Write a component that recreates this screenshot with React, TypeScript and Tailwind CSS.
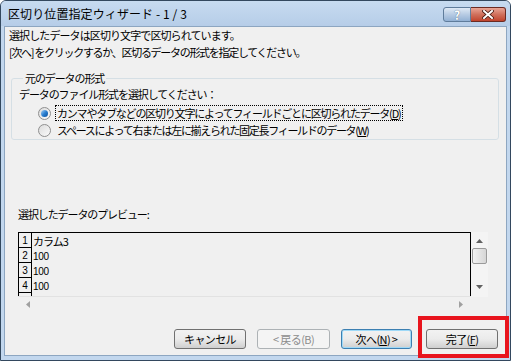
import React from "react";

const jp = "font-['Meiryo_UI','Noto_Sans_CJK_JP',sans-serif]";

function Radio({ checked }: { checked?: boolean }) {
    return (
        <span className="w-[13px] h-[13px] rounded-full border border-[#8f8f8f] bg-gradient-to-br from-[#dcdcdc] to-[#fafafa] flex items-center justify-center shrink-0">
            {checked && <span className="w-[7px] h-[7px] rounded-full bg-gradient-to-br from-[#9fd0f5] via-[#2a7fd0] to-[#0b4f9e]" />}
        </span>
    );
}

function Btn({ children, variant }: { children: React.ReactNode; variant?: "default" | "disabled" }) {
    const border = variant === "default" ? "border-[#3c7fb1] shadow-[inset_0_0_0_1px_#9fd9f7]" : variant === "disabled" ? "border-[#adb2b5]" : "border-[#707070]";
    const text = variant === "disabled" ? "text-[#8c8c8c]" : "text-black";
    const bg = variant === "disabled" ? "bg-[#f4f4f4]" : "bg-gradient-to-b from-[#f2f2f2] via-[#ebebeb] to-[#cfcfcf]";
    return (
        <div className={`h-[20px] rounded-[3px] border ${border} ${bg} ${text} flex items-center justify-center text-[11px] tracking-[-0.6px]`}>
            {children}
        </div>
    );
}

export default function App() {
    return (
        <div className={`w-[511px] h-[361px] bg-white ${jp} text-[11px] leading-[16px] text-black`}>
            <div className="w-full h-full rounded-t-[6px] border border-[#33485e] bg-[#c2d7ee] flex flex-col overflow-hidden">
                {/* title bar */}
                <div className="h-[25px] shrink-0 flex items-start pl-[7px] pr-[4px] bg-gradient-to-b from-[#c7dbf0] to-[#b6cde8]">
                    <span className="mt-[5px] text-[12px] tracking-[0.1px] text-black">区切り位置指定ウィザード - 1 / 3</span>
                    <div className="ml-auto flex items-start mt-[6px]">
                        <div className="w-[28px] h-[15px] rounded-l-[3px] border border-[#5f7c9b] bg-gradient-to-b from-[#dfe9f5] via-[#b7cbe3] to-[#93b1d4] flex items-center justify-center text-white text-[12px] font-bold [text-shadow:0_0_1px_#374e6a] leading-none">?</div>
                        <div className="w-[35px] h-[15px] rounded-r-[3px] border border-l-0 border-[#6b2a22] bg-gradient-to-b from-[#e8a596] via-[#d0705c] to-[#c0432c] flex items-center justify-center">
                            <svg width="12" height="9" viewBox="0 0 12 9">
                                <path d="M2 1 L10 8 M10 1 L2 8" stroke="#4a1a12" strokeWidth="3.6" strokeLinecap="square" />
                                <path d="M2 1 L10 8 M10 1 L2 8" stroke="#ffffff" strokeWidth="2" strokeLinecap="square" />
                            </svg>
                        </div>
                    </div>
                </div>
                {/* client */}
                <div className="flex-1 mx-[3px] mb-[4px] border border-[#8da6c1] bg-[#f0f0f0] flex flex-col pl-[4px] pr-[6px] relative">
                    <div className="tracking-[-0.9px]">選択したデータは区切り文字で区切られています。</div>
                    <div className="mt-[1px] tracking-[-1.3px]">[次へ] をクリックするか、区切るデータの形式を指定してください。</div>
                    <fieldset className="mt-[10px] ml-[2px] mr-[1px] h-[70px] border border-[#d5dfe5] rounded-[3px] pl-[7px]">
                        <legend className="ml-[4px] px-[2px] tracking-[-1.1px]">元のデータの形式</legend>
                        <div className="mt-[1px] leading-[14px] tracking-[-1.1px]">データのファイル形式を選択してください：</div>
                        <div className="flex items-center gap-[5px] pl-[19px] mt-[5px]">
                            <Radio checked />
                            <span className="outline-1 outline-dotted outline-black px-[1px] leading-[14px] tracking-[-1.2px]">カンマやタブなどの区切り文字によってフィールドごとに区切られたデータ(<span className="underline">D</span>)</span>
                        </div>
                        <div className="flex items-center gap-[5px] pl-[19px] mt-[3px]">
                            <Radio />
                            <span className="px-[1px] leading-[14px] tracking-[-1.3px]">スペースによって右または左に揃えられた固定長フィールドのデータ(<span className="underline">W</span>)</span>
                        </div>
                    </fieldset>
                    <div className="mt-[66px] pl-[9px] tracking-[-1.1px]">選択したデータのプレビュー:</div>
                    {/* preview */}
                    <div className="mt-[10px] ml-[9px] mr-[12px] flex">
                        <div className="flex-1 flex flex-col">
                            <div className="h-[64px] border border-b-0 border-black flex overflow-hidden">
                                <div className="w-[13px] border-r border-black flex flex-col text-[10px] font-['Liberation_Sans',sans-serif] leading-none">
                                    {["1", "2", "3", "4"].map((n) => (
                                        <div key={n} className="h-[15px] shrink-0 border-b border-black flex items-end justify-center pb-[1px]">{n}</div>
                                    ))}
                                </div>
                                <div className="flex flex-col pl-[1px] pt-[1px]">
                                    <div className="h-[15px] leading-[15px] tracking-[-1px]">カラム3</div>
                                    {["100", "100", "100"].map((v, i) => (
                                        <div key={i} className="h-[15px] leading-[15px] text-[10px] font-['Liberation_Sans_Narrow','Liberation_Sans',sans-serif] tracking-[-0.3px]">{v}</div>
                                    ))}
                                </div>
                            </div>
                            <div className="h-[16px] border-t border-[#e2e2e2] bg-[#f0f0f0] flex items-center justify-between px-[8px]">
                                <svg width="4" height="7" viewBox="0 0 4 7"><path d="M4 0 L0 3.5 L4 7 Z" fill="#a0a0a0" /></svg>
                                <svg width="4" height="7" viewBox="0 0 4 7"><path d="M0 0 L4 3.5 L0 7 Z" fill="#a0a0a0" /></svg>
                            </div>
                        </div>
                        <div className="w-[17px] h-[65px] bg-[#f4f4f4] flex flex-col items-center pt-[7px]">
                            <svg width="7" height="4" viewBox="0 0 7 4"><path d="M0 4 L3.5 0 L7 4 Z" fill="#606060" /></svg>
                            <div className="mt-[5px] w-[15px] h-[16px] rounded-[2px] border border-[#9a9a9a] bg-gradient-to-r from-[#f2f2f2] to-[#d6d6d6]" />
                            <div className="flex-1" />
                            <svg width="7" height="4" viewBox="0 0 7 4" className="mb-[8px]"><path d="M0 0 L3.5 4 L7 0 Z" fill="#606060" /></svg>
                        </div>
                    </div>
                    {/* buttons */}
                    <div className="mt-[17px] flex justify-end gap-[11px] pr-[2px]">
                        <div className="w-[72px]"><Btn>キャンセル</Btn></div>
                        <div className="w-[73px]"><Btn variant="disabled">&lt; 戻る(B)</Btn></div>
                        <div className="w-[71px] mr-[3px]"><Btn variant="default">次へ(<span className="underline">N</span>) &gt;</Btn></div>
                        <div className="w-[72px]"><Btn>完了(<span className="underline">F</span>)</Btn></div>
                    </div>
                    {/* highlight */}
                    <div className="absolute right-[-3px] bottom-[-3px] w-[91px] h-[42px] border-[4px] border-[#e8141d]" />
                </div>
            </div>
        </div>
    );
}
